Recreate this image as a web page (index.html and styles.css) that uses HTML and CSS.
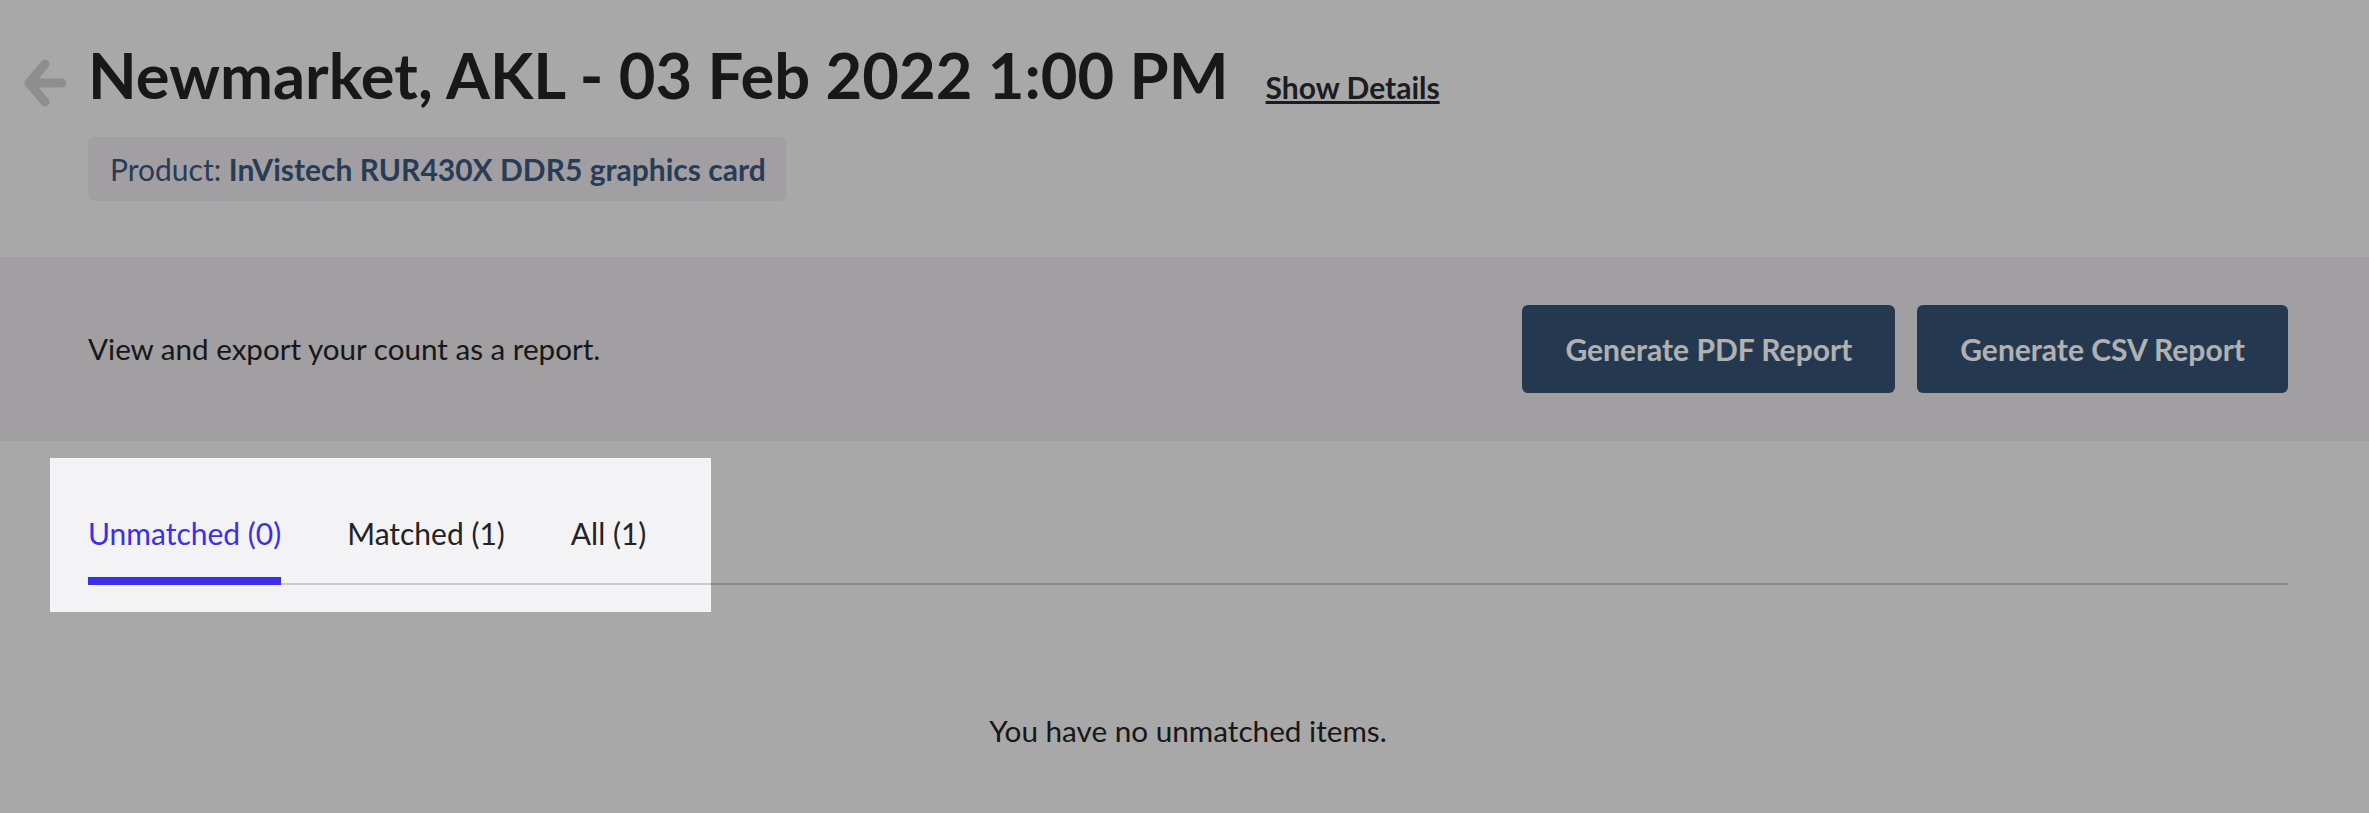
FILE: index.html
```html
<!DOCTYPE html>
<html lang="en">
<head>
    <meta charset="UTF-8">
    <meta name="viewport" content="width=device-width, initial-scale=1.0">
    <title>Count - Newmarket, AKL</title>
    <link rel="stylesheet" href="styles.css">
</head>
<body>
    <header class="page-header">
        <div class="title-row">
            <a href="#" class="back-link" aria-label="Back">
                <svg width="44" height="48" viewBox="0 0 44 48" fill="none" stroke="currentColor" stroke-width="9" stroke-linecap="round" stroke-linejoin="round">
                    <path d="M38 24H6"/>
                    <path d="M21 5L5 24L21 43"/>
                </svg>
            </a>
            <h1>Newmarket, AKL - 03 Feb 2022 1:00 PM</h1>
            <a href="#" class="show-details">Show Details</a>
        </div>
        <div class="product-tag">Product: <strong>InVistech RUR430X DDR5 graphics card</strong></div>
    </header>

    <section class="report-bar">
        <p>View and export your count as a report.</p>
        <div class="report-actions">
            <button type="button">Generate PDF Report</button>
            <button type="button">Generate CSV Report</button>
        </div>
    </section>

    <section class="results">
        <!-- tour spotlight over the tabs -->
        <div class="spotlight"></div>

        <nav class="tabs">
            <a href="#" class="tab active">Unmatched (0)</a>
            <a href="#" class="tab">Matched (1)</a>
            <a href="#" class="tab">All (1)</a>
        </nav>

        <p class="empty-message">You have no unmatched items.</p>
    </section>
</body>
</html>
```

FILE: styles.css
```css
:root {
    --bg-color: #f3f2f4;
    --panel-bg: #e8e5e9;
    --text-color: #232325;
    --primary-color: #355173;
    --tab-color: #3b30e8;
    --line-color: #c9c7cb;
}

html,
body {
    min-height: 100vh;
}

body {
    font-family: 'Lato', sans-serif;
    background-color: var(--bg-color);
    color: var(--text-color);
    margin: 0;
    padding: 0;
    overflow: hidden;
}

.page-header {
    padding: 37px 81px 56px 88px;
}

.title-row {
    display: flex;
    align-items: baseline;
}

.back-link {
    display: block;
    align-self: flex-start;
    margin: 22px 20px 0 -64px;
    color: #cecdcf;
}

.back-link svg {
    display: block;
}

h1 {
    margin: 0;
    font-size: 63.3px;
    line-height: 76px;
    font-weight: 700;
}

.show-details {
    margin-left: 37px;
    font-size: 30px;
    font-weight: 700;
    color: #2a2a2d;
}

.product-tag {
    width: fit-content;
    margin-top: 24px;
    padding: 14px 20px 14px 22px;
    border-radius: 6px;
    background-color: var(--panel-bg);
    font-size: 30px;
    line-height: 36px;
    color: #3b577d;
}

.report-bar {
    display: flex;
    justify-content: space-between;
    align-items: center;
    padding: 48px 81px 48px 88px;
    background-color: var(--panel-bg);
}

.report-bar p {
    margin: 0;
    font-size: 29.6px;
    line-height: 36px;
}

.report-actions {
    display: flex;
    gap: 22px;
}

.report-actions button {
    padding: 26px 43px;
    background-color: var(--primary-color);
    color: white;
    border: none;
    border-radius: 6px;
    font-family: inherit;
    font-size: 30px;
    line-height: 36px;
    font-weight: 700;
    cursor: pointer;
}

.results {
    position: relative;
    padding: 71px 81px 0 88px;
}

.spotlight {
    position: absolute;
    top: 17px;
    left: 50px;
    width: 661px;
    height: 154px;
    box-shadow: 0 0 0 4000px rgba(0, 0, 0, 0.305);
    pointer-events: none;
    z-index: 10;
}

.tabs {
    display: flex;
    gap: 66px;
    border-bottom: 2px solid var(--line-color);
}

.tab {
    margin-bottom: -2px;
    padding: 3px 0 26px;
    border-bottom: 8px solid transparent;
    font-size: 30px;
    line-height: 36px;
    color: var(--text-color);
    text-decoration: none;
}

.tab.active {
    color: var(--tab-color);
    border-bottom-color: var(--tab-color);
}

.empty-message {
    margin: 128px 0 0;
    text-align: center;
    font-size: 29.7px;
    line-height: 36px;
}
```
